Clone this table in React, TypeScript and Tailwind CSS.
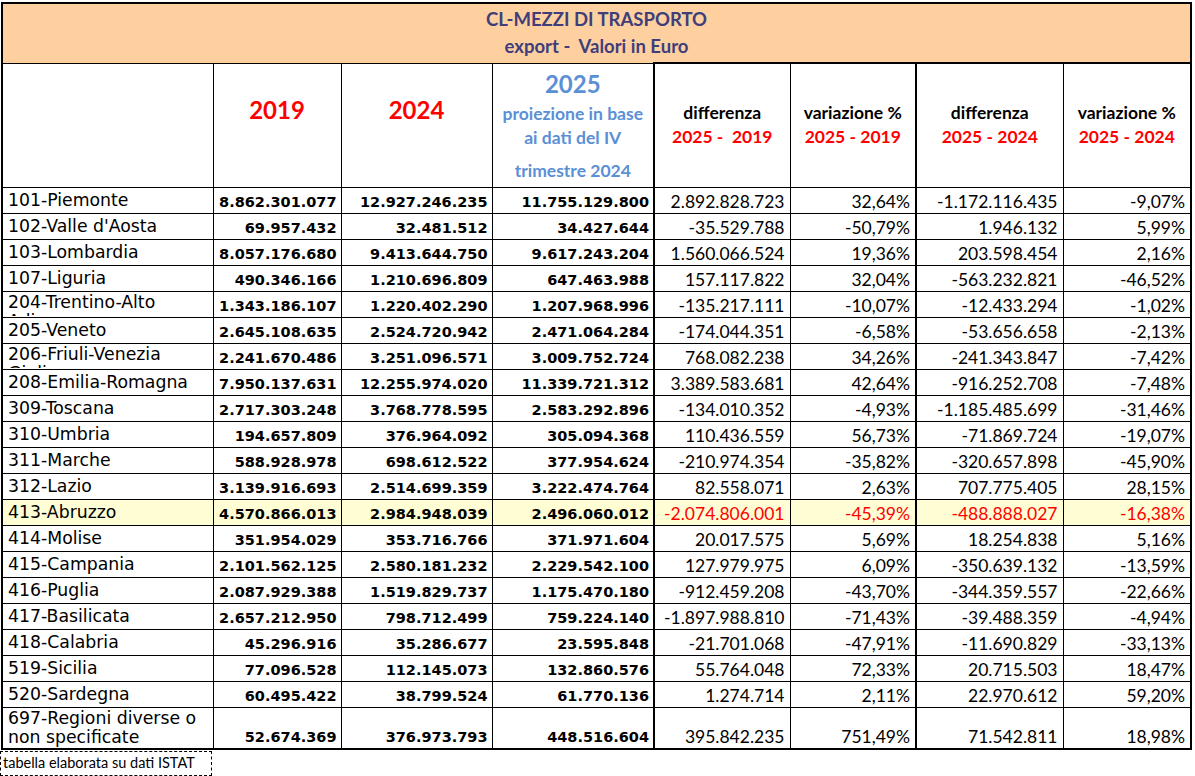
import React from "react";

const ROWS: string[][] = [
  ["101-Piemonte", "8.862.301.077", "12.927.246.235", "11.755.129.800", "2.892.828.723", "32,64%", "-1.172.116.435", "-9,07%"],
  ["102-Valle d'Aosta", "69.957.432", "32.481.512", "34.427.644", "-35.529.788", "-50,79%", "1.946.132", "5,99%"],
  ["103-Lombardia", "8.057.176.680", "9.413.644.750", "9.617.243.204", "1.560.066.524", "19,36%", "203.598.454", "2,16%"],
  ["107-Liguria", "490.346.166", "1.210.696.809", "647.463.988", "157.117.822", "32,04%", "-563.232.821", "-46,52%"],
  ["204-Trentino-Alto Adige", "1.343.186.107", "1.220.402.290", "1.207.968.996", "-135.217.111", "-10,07%", "-12.433.294", "-1,02%"],
  ["205-Veneto", "2.645.108.635", "2.524.720.942", "2.471.064.284", "-174.044.351", "-6,58%", "-53.656.658", "-2,13%"],
  ["206-Friuli-Venezia Giulia", "2.241.670.486", "3.251.096.571", "3.009.752.724", "768.082.238", "34,26%", "-241.343.847", "-7,42%"],
  ["208-Emilia-Romagna", "7.950.137.631", "12.255.974.020", "11.339.721.312", "3.389.583.681", "42,64%", "-916.252.708", "-7,48%"],
  ["309-Toscana", "2.717.303.248", "3.768.778.595", "2.583.292.896", "-134.010.352", "-4,93%", "-1.185.485.699", "-31,46%"],
  ["310-Umbria", "194.657.809", "376.964.092", "305.094.368", "110.436.559", "56,73%", "-71.869.724", "-19,07%"],
  ["311-Marche", "588.928.978", "698.612.522", "377.954.624", "-210.974.354", "-35,82%", "-320.657.898", "-45,90%"],
  ["312-Lazio", "3.139.916.693", "2.514.699.359", "3.222.474.764", "82.558.071", "2,63%", "707.775.405", "28,15%"],
  ["413-Abruzzo", "4.570.866.013", "2.984.948.039", "2.496.060.012", "-2.074.806.001", "-45,39%", "-488.888.027", "-16,38%"],
  ["414-Molise", "351.954.029", "353.716.766", "371.971.604", "20.017.575", "5,69%", "18.254.838", "5,16%"],
  ["415-Campania", "2.101.562.125", "2.580.181.232", "2.229.542.100", "127.979.975", "6,09%", "-350.639.132", "-13,59%"],
  ["416-Puglia", "2.087.929.388", "1.519.829.737", "1.175.470.180", "-912.459.208", "-43,70%", "-344.359.557", "-22,66%"],
  ["417-Basilicata", "2.657.212.950", "798.712.499", "759.224.140", "-1.897.988.810", "-71,43%", "-39.488.359", "-4,94%"],
  ["418-Calabria", "45.296.916", "35.286.677", "23.595.848", "-21.701.068", "-47,91%", "-11.690.829", "-33,13%"],
  ["519-Sicilia", "77.096.528", "112.145.073", "132.860.576", "55.764.048", "72,33%", "20.715.503", "18,47%"],
  ["520-Sardegna", "60.495.422", "38.799.524", "61.770.136", "1.274.714", "2,11%", "22.970.612", "59,20%"],
  ["697-Regioni diverse o non specificate", "52.674.369", "376.973.793", "448.516.604", "395.842.235", "751,49%", "71.542.811", "18,98%"],
];

const calibri = "font-['Lato','Open_Sans',sans-serif]";
const verdana = "font-['DejaVu_Sans','Verdana',sans-serif]";

export default function App() {
  return (
    <div className="min-h-[776px] w-[1195px] bg-white pl-px pt-[2px]">
      <table className="table-fixed border-collapse border-2 border-black text-black">
        <colgroup>
          <col className="w-[211px]" />
          <col className="w-[128px]" />
          <col className="w-[151px]" />
          <col className="w-[162px]" />
          <col className="w-[136px]" />
          <col className="w-[126px]" />
          <col className="w-[147px]" />
          <col className="w-[128px]" />
        </colgroup>
        <thead>
          <tr className="h-[60px]">
            <td
              colSpan={8}
              className={`${calibri} border border-black bg-[#fed09f] text-center text-[18.5px] font-bold leading-[27px] text-[#3f3e7b]`}
            >
              <div>CL-MEZZI DI TRASPORTO</div>
              <div className="whitespace-pre">export -  Valori in Euro</div>
            </td>
          </tr>
          <tr className={`${calibri} h-[124px] text-center font-bold`}>
            <td className="border border-black" />
            <td className="border border-black pb-[30px] text-[24px] text-[#ff0000]">2019</td>
            <td className="border border-black pb-[30px] text-[24px] text-[#ff0000]">2024</td>
            <td className="border border-black align-top text-[#5b8fd6]">
              <div className="pt-[2px] text-[24px] leading-[36px]">2025</div>
              <div className="text-[17.5px] leading-[24px]">proiezione in base</div>
              <div className="text-[17.5px] leading-[24px]">ai dati del IV</div>
              <div className="pt-[9px] text-[17.5px] leading-[24px]">trimestre 2024</div>
            </td>
            <HeadDiff top="differenza" bottom="2025 -  2019" thick />
            <HeadDiff top="variazione %" bottom="2025 - 2019" />
            <HeadDiff top="differenza" bottom="2025 - 2024" thick />
            <HeadDiff top="variazione %" bottom="2025 - 2024" last />
          </tr>
        </thead>
        <tbody>
          {ROWS.map((r, i) => {
            const hl = r[0].startsWith("413");
            const lastRow = i === ROWS.length - 1;
            const clip = r[0].startsWith("204") || r[0].startsWith("206");
            return (
              <tr key={r[0]} className={`${lastRow ? "h-[42px]" : "h-[26px]"} ${hl ? "bg-[#fefdd3]" : ""}`}>
                <td className={`${verdana} border border-black px-[5px] align-top text-[17.3px] leading-[19px]`}>
                  {clip ? (
                    <div className="h-[24px] overflow-hidden pt-px">{r[0]}</div>
                  ) : (
                    <div className={lastRow ? "pt-px" : "pt-[3px]"}>{r[0]}</div>
                  )}
                </td>
                {r.slice(1, 4).map((v, j) => (
                  <td
                    key={j}
                    className={`${verdana} border border-black pr-[4px] pb-[2px] text-right align-bottom text-[14.5px] font-bold leading-[18px]`}
                  >
                    {v}
                  </td>
                ))}
                {r.slice(4).map((v, j) => (
                  <td
                    key={j + 4}
                    className={`${calibri} border border-black pr-[5px] pb-px text-right align-bottom text-[17.5px] leading-[20px] ${
                      hl ? "text-[#ff0000]" : ""
                    } ${j === 0 || j === 2 ? "border-l-2" : ""} ${j === 3 ? "border-r-2" : ""} ${lastRow ? "border-b-2" : ""}`}
                  >
                    {v}
                  </td>
                ))}
              </tr>
            );
          })}
        </tbody>
      </table>
      <div
        className={`${calibri} -ml-px mt-px h-[25px] w-[212px] border border-dashed border-black pl-[2px] text-[14.5px] leading-[22px]`}
      >
        tabella elaborata su dati ISTAT
      </div>
    </div>
  );
}

function HeadDiff({ top, bottom, thick, last }: { top: string; bottom: string; thick?: boolean; last?: boolean }) {
  return (
    <td
      className={`border border-t-2 border-black text-center text-[17.5px] font-bold leading-[24px] ${thick ? "border-l-2" : ""} ${
        last ? "border-r-2" : ""
      }`}
    >
      <div>{top}</div>
      <div className="whitespace-pre text-[#ff0000]">{bottom}</div>
    </td>
  );
}
